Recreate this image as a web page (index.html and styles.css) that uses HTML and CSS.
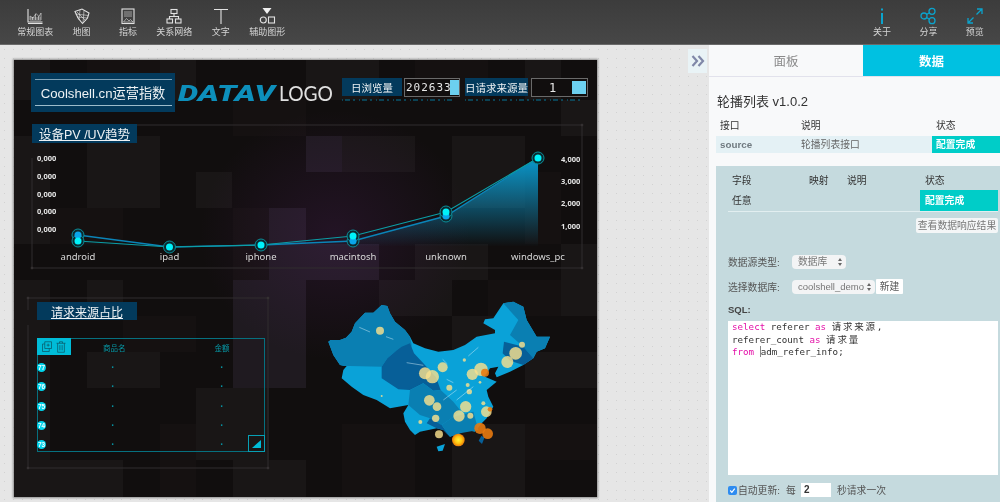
FILE: index.html
```
<!DOCTYPE html>
<html lang="zh">
<head>
<meta charset="utf-8">
<title>DataV</title>
<link rel="stylesheet" href="styles.css">
</head>
<body>
<header class="topbar">
  <nav class="tools">
    <div class="tool"><svg class="ico" viewBox="0 0 16 16"><path d="M1 1V14H15.500M1 15.500H15.500"/><path class="thin" d="M3 12V8L6 10 9 5.500 12 8.500 14 5V12ZM3 10H14M5.500 9V12M8.500 6V12M11.500 8V12"/></svg><span>常规图表</span></div>
    <div class="tool"><svg class="ico" viewBox="0 0 16 16"><path d="M1 3.500 8 1 15 5 13.500 10 8.500 15.500 4 10Z"/><path class="thin" d="M1.500 6 14.500 7.500M3 9 13.500 10M6 1.800 5 12M10 2.500 9 15M3 4 12 13"/></svg><span>地图</span></div>
    <div class="tool"><svg class="ico" viewBox="0 0 16 16"><rect x="2" y="1" width="12" height="14.500"/><path class="thin" d="M4 4H12M4 6H12M4 8H12"/><path class="thin" d="M3.500 14 6.500 10.500 9 13 10.500 11.500 13 14Z"/></svg><span>指标</span></div>
    <div class="tool"><svg class="ico" viewBox="0 0 16 16"><rect x="5" y="1.500" width="6" height="4"/><rect x="1" y="11" width="5.500" height="4"/><rect x="9.500" y="11" width="5.500" height="4"/><path d="M8 5.500V8.500M3.500 11V8.500H12.500V11"/></svg><span>关系网络</span></div>
    <div class="tool"><svg class="ico" viewBox="0 0 16 16"><path d="M1 1.500H15M8 1.500V16"/></svg><span>文字</span></div>
    <div class="tool"><svg class="ico" viewBox="0 0 16 16"><path class="solid" d="M3.500 0H12.500L8 6Z"/><circle cx="4.300" cy="12" r="3"/><rect x="9.500" y="9" width="6" height="6"/></svg><span>辅助图形</span></div>
  </nav>
  <nav class="tools">
    <div class="tool"><svg class="ico cy" viewBox="0 0 16 16"><path class="solidc" d="M7 0.500H9V2.500H7ZM7 5H9V16H7Z"/></svg><span>关于</span></div>
    <div class="tool"><svg class="ico cy" viewBox="0 0 16 16"><circle cx="4" cy="8" r="3"/><circle cx="12" cy="3.300" r="3"/><circle cx="12" cy="12.700" r="3"/><path d="M6.600 6.500 9.400 4.800M6.600 9.500 9.400 11.200"/></svg><span>分享</span></div>
    <div class="tool"><svg class="ico cy" viewBox="0 0 16 16"><path d="M9.500 6.500 15 1M10 1H15V6M6.500 9.500 1 15M1 10V15H6"/></svg><span>预览</span></div>
  </nav>
</header>
<div class="work">
  <main class="canvas">
    <section class="screen">
      <svg class="layer" viewBox="14 60 583 437">
        <defs>
          <radialGradient id="glow"><stop offset="0" stop-color="#6b2a80" stop-opacity=".2"/><stop offset="1" stop-color="#6b2a80" stop-opacity="0"/></radialGradient>
          <radialGradient id="hot"><stop offset="0" stop-color="#fff23a"/><stop offset=".55" stop-color="#ffc410"/><stop offset="1" stop-color="#e87808"/></radialGradient>
          <linearGradient id="area" x1="0" y1="0" x2="0" y2="1"><stop offset="0" stop-color="#0a98cc"/><stop offset="1" stop-color="#0a98cc" stop-opacity="0"/></linearGradient>
        </defs>
        <rect class="t0" x="14" y="60" width="583" height="437"/>
        <g class="t1">
          <rect x="14" y="60" width="36" height="40"/><rect x="160" y="60" width="36" height="40"/><rect x="306" y="60" width="73" height="40"/><rect x="525" y="60" width="36" height="40"/>
          <rect x="14" y="136" width="36" height="108"/><rect x="87" y="136" width="73" height="72"/><rect x="196" y="172" width="36" height="36"/><rect x="342" y="136" width="73" height="36"/>
          <rect x="452" y="136" width="73" height="72"/><rect x="14" y="280" width="36" height="217"/><rect x="87" y="352" width="73" height="36"/><rect x="196" y="388" width="73" height="72"/>
          <rect x="50" y="460" width="73" height="37"/><rect x="233" y="460" width="73" height="37"/><rect x="452" y="316" width="73" height="36"/><rect x="561" y="244" width="36" height="72"/>
          <rect x="452" y="424" width="73" height="73"/><rect x="379" y="280" width="73" height="36"/><rect x="525" y="352" width="72" height="36"/><rect x="87" y="280" width="36" height="36"/>
          <rect x="415" y="244" width="73" height="36"/><rect x="561" y="100" width="36" height="36"/>
        </g>
        <g class="t2">
          <rect x="87" y="60" width="73" height="40"/><rect x="233" y="100" width="73" height="36"/><rect x="415" y="60" width="73" height="40"/><rect x="50" y="208" width="73" height="36"/>
          <rect x="233" y="208" width="36" height="72"/><rect x="123" y="316" width="73" height="36"/><rect x="342" y="424" width="73" height="73"/><rect x="525" y="172" width="36" height="72"/>
          <rect x="160" y="424" width="36" height="73"/><rect x="525" y="424" width="72" height="36"/><rect x="488" y="280" width="73" height="36"/>
        </g>
        <g class="t3">
          <rect x="233" y="280" width="73" height="108"/><rect x="269" y="208" width="37" height="72"/><rect x="306" y="136" width="36" height="36"/><rect x="306" y="244" width="73" height="36"/>
        </g>
        <ellipse fill="url(#glow)" cx="335" cy="235" rx="135" ry="125"/>

        <g class="frame">
          <path d="M32 125H582V268H32V158"/>
          <path d="M28 310V298H268V468H28V325"/>
          <circle cx="582" cy="125" r="1"/><circle cx="582" cy="268" r="1"/><circle cx="32" cy="268" r="1"/><circle cx="28" cy="298" r="1"/><circle cx="268" cy="298" r="1"/><circle cx="28" cy="468" r="1"/><circle cx="268" cy="468" r="1"/>
        </g>

        <path fill="url(#area)" d="M78 241 169.500 247 261 245 353 241 446 216 538 158V246H78Z"/>
        <path class="lineb" d="M78 235 169.500 247 261 245 353 241 446 216 538 158"/>
        <path class="linec" d="M78 241 169.500 247 261 245 353 236 446 212 538 158"/>
        <g class="halo">
          <circle cx="78" cy="235" r="6"/><circle cx="78" cy="241" r="6"/><circle cx="169.500" cy="247" r="6"/><circle cx="261" cy="245" r="6"/><circle cx="353" cy="241" r="6"/><circle cx="353" cy="236" r="6"/><circle cx="446" cy="216" r="6"/><circle cx="446" cy="212" r="6"/><circle cx="538" cy="158" r="6"/>
        </g>
        <g class="dotb"><circle cx="78" cy="235" r="3.500"/><circle cx="353" cy="241" r="3.500"/><circle cx="446" cy="216" r="3.500"/></g>
        <g class="dotc"><circle cx="78" cy="241" r="3.500"/><circle cx="169.500" cy="247" r="3.500"/><circle cx="261" cy="245" r="3.500"/><circle cx="353" cy="236" r="3.500"/><circle cx="446" cy="212" r="3.500"/><circle cx="538" cy="158" r="3.500"/></g>

        <g class="ylab">
          <text x="37" y="161">0,000</text><text x="37" y="179">0,000</text><text x="37" y="197">0,000</text><text x="37" y="214">0,000</text><text x="37" y="232">0,000</text>
          <text x="561" y="162">4,000</text><text x="561" y="184">3,000</text><text x="561" y="206">2,000</text><text x="561" y="229">1,000</text>
        </g>
        <g class="xlab">
          <text x="78" y="260">android</text><text x="169.500" y="260">ipad</text><text x="261" y="260">iphone</text><text x="353" y="260">macintosh</text><text x="446" y="260">unknown</text><text x="538" y="260">windows_pc</text>
        </g>

        <text class="brand" x="178" y="101" textLength="97" lengthAdjust="spacingAndGlyphs">DATAV</text>
        <text class="brand2" x="279" y="101" textLength="54" lengthAdjust="spacingAndGlyphs">LOGO</text>
        <path class="dash" d="M342 100H455M465 100H580"/>

        <g transform="translate(310 290) scale(.33333)">
          <path class="m1" d="M55 155 62 150 90 150 108 143 125 125 135 100 165 68 190 68 215 45 232 48 240 70 255 95 285 120 300 140 310 160 345 175 385 185 430 180 465 165 500 140 555 130 555 120 520 100 525 88 550 85 580 40 610 35 640 50 650 90 680 140 720 140 705 175 680 185 670 205 640 225 600 245 560 262 555 250 565 230 540 235 525 260 560 275 530 300 535 320 550 350 530 385 515 400 495 425 470 420 450 430 420 440 400 420 380 415 355 420 330 425 315 435 300 420 285 395 280 370 295 345 240 355 200 330 160 315 125 290 95 265 100 240 110 228 90 225 70 195Z"/>
          <path class="m2" d="M55 155 62 150 90 150 108 143 125 125 135 100 165 68 190 68 215 45 232 48 240 70 255 95 285 120 300 140 305 165 300 190 275 180 255 185 232 205 215 230 120 228 100 228 90 225 70 195Z"/>
          <path class="m3" d="M215 230 232 205 255 185 275 170 300 160 312 190 340 220 378 262 392 300 370 302 340 280 300 300 265 298 215 265Z"/>
          <path class="m2" d="M300 300 340 280 370 302 392 300 430 335 450 360 430 380 395 405 360 385 330 375 295 345Z"/>
          <path class="m3" d="M360 385 395 405 420 440 400 420 380 415 350 400Z"/>
          <path class="m2" d="M430 380 490 365 505 420 450 430 420 440 395 405Z"/>
          <path class="m2" d="M580 40 610 35 640 50 650 90 680 140 720 140 705 175 680 185 670 205 640 170 600 135 625 90Z"/>
          <path class="m3" d="M582 155 640 170 670 205 640 225 600 212 578 190Z"/>
          <path class="m1" d="M380 470 405 462 398 482 385 484Z"/>
          <path class="m3" d="M514 438 524 442 516 462 506 452Z"/>
          <g class="bub">
            <circle cx="210" cy="122" r="12"/><circle cx="345" cy="250" r="18"/><circle cx="367" cy="260" r="20"/><circle cx="398" cy="232" r="15"/><circle cx="463" cy="210" r="5"/><circle cx="513" cy="238" r="20"/><circle cx="487" cy="253" r="17"/><circle cx="592" cy="216" r="18"/><circle cx="617" cy="190" r="19"/><circle cx="636" cy="164" r="9"/><circle cx="418" cy="293" r="9"/><circle cx="358" cy="331" r="16"/><circle cx="381" cy="350" r="13"/><circle cx="467" cy="350" r="17"/><circle cx="447" cy="378" r="17"/><circle cx="481" cy="377" r="9"/><circle cx="529" cy="365" r="16"/><circle cx="377" cy="385" r="11"/><circle cx="331" cy="396" r="6"/><circle cx="387" cy="433" r="12"/><circle cx="473" cy="285" r="6"/><circle cx="478" cy="305" r="8"/><circle cx="510" cy="277" r="4"/><circle cx="520" cy="340" r="6"/><circle cx="215" cy="318" r="3"/>
          </g>
          <g class="ora"><circle cx="510" cy="415" r="17"/><circle cx="533" cy="431" r="16"/><circle cx="525" cy="248" r="12"/><circle cx="540" cy="358" r="7"/></g>
          <circle fill="url(#hot)" cx="445" cy="450" r="19"/>
          <path class="trail" d="M148 112 180 126M228 140 250 148M290 218 340 226M505 172 475 198M398 208 412 222M400 330 440 300M440 330 490 290M410 268 430 278"/>
        </g>
      </svg>

      <div class="mainttl"><span>Coolshell.cn运营指数</span></div>
      <div class="lab lab-a"><span>日浏览量</span></div>
      <div class="val val-a"><span>202633</span><i></i></div>
      <div class="lab lab-b"><span>日请求来源量</span></div>
      <div class="val val-b"><span>1</span><i></i></div>

      <h2 class="sec sec-a">设备PV /UV趋势</h2>
      <h2 class="sec sec-b">请求来源占比</h2>

      <div class="tbl">
        <div class="tbl-tools">
          <svg viewBox="0 0 16 16"><path d="M5 1H14V10H5ZM5 4H2V14H11V10M9.500 3.500V7.500M7.500 5.500H11.500"/></svg>
          <svg viewBox="0 0 16 16"><path d="M2 3H14M6 3V1H10V3M3.500 3V15H12.500V3M6.500 5.500V12.500M9.500 5.500V12.500"/></svg>
        </div>
        <div class="tbl-head"><span></span><span>商品名</span><span>金额</span></div>
        <div class="tbl-row"><b>77</b><span>·</span><span>·</span></div>
        <div class="tbl-row"><b>76</b><span>·</span><span>·</span></div>
        <div class="tbl-row"><b>75</b><span>·</span><span>·</span></div>
        <div class="tbl-row"><b>74</b><span>·</span><span>·</span></div>
        <div class="tbl-row"><b>73</b><span>·</span><span>·</span></div>
        <div class="tbl-corner"></div>
      </div>
    </section>
    <button class="fold"><svg viewBox="0 0 14 12"><path d="M1.500 1 6 6 1.500 11M7.500 1 12 6 7.500 11"/></svg></button>
  </main>

  <aside class="panel">
    <div class="tabs"><div class="tab">面板</div><div class="tab on">数据</div></div>
    <div class="pbody">
      <h1 class="ptitle">轮播列表 v1.0.2</h1>
      <div class="grid-a ghead"><span>接口</span><span>说明</span><span>状态</span></div>
      <div class="grid-a grow"><span class="src">source</span><span>轮播列表接口</span><span class="ok">配置完成</span></div>
      <div class="cfg">
        <div class="grid-b ghead2"><span>字段</span><span>映射</span><span>说明</span><span>状态</span></div>
        <div class="grid-b grow2"><span>任意</span><span></span><span></span><span class="ok">配置完成</span></div>
        <div class="btnrow"><span class="btn">查看数据响应结果</span></div>
        <div class="frow first"><label>数据源类型:</label><span class="sel sel-s">数据库<em></em></span></div>
        <div class="frow second"><label>选择数据库:</label><span class="sel sel-l">coolshell_demo<em></em></span><span class="newb">新建</span></div>
        <div class="sqll">SQL:</div>
        <div class="sql"><div><u>select</u> referer <u>as</u> <span class="cj">请求来源,</span></div><div>referer_count <u>as</u> <span class="cj">请求量</span></div><div><u>from</u> <i class="caret"></i>adm_refer_info;</div></div>
        <div class="auto"><span class="chk"><svg viewBox="0 0 10 10"><path d="M2.500 5 4.300 7 7.500 3"/></svg></span><span class="al">自动更新:</span><span class="ae">每</span><span class="num">2</span><span class="as">秒请求一次</span></div>
      </div>
    </div>
  </aside>
</div>
</body>
</html>
```
FILE: styles.css
```
* { box-sizing: border-box; }
html, body { margin: 0; height: 502px; overflow: hidden; }
body { font-family: "Liberation Sans", "Noto Sans CJK SC", sans-serif; background: #e6e6e6; color: #444; }

.topbar { height: 45px; background: linear-gradient(#3c3c3c, #474747); display: flex; justify-content: space-between; padding: 0 2px 0 12px; border-bottom: 1px solid #6a6a6a; filter: blur(.3px); }
.tools { display: flex; }
.tool { width: 46.4px; display: flex; flex-direction: column; align-items: center; padding-top: 8px; color: #d4d4d4; font-size: 9px; line-height: 12px; white-space: nowrap; }
.ico { width: 16px; height: 16px; margin-bottom: 2px; fill: none; stroke: #e2e2e2; stroke-width: 1.100; overflow: visible; }
.ico .thin { stroke-width: .6; }
.ico .solid { fill: #f0f0f0; stroke: none; }
.ico.cy { stroke: #0ba3cc; stroke-width: 1.300; }
.ico .solidc { fill: #0ba3cc; stroke: none; }

.work { display: flex; height: 457px; filter: blur(.3px); }
.canvas { position: relative; width: 709px; padding: 15px 0 0 14px; background-color: #e6e6e6; background-image: radial-gradient(#d2d2d2 .8px, transparent 1px); background-size: 9px 9px; }
.screen { position: relative; width: 583px; height: 437px; box-shadow: 0 0 2px 1px #8d8d8d; overflow: hidden; }
.layer { position: absolute; left: 0; top: 0; width: 583px; height: 437px; }
.fold { position: absolute; left: 688px; top: 4px; width: 19px; height: 24px; padding: 0; border: 0; background: #e9f3f6; display: flex; align-items: center; justify-content: center; }
.fold svg { width: 14px; height: 12px; fill: none; stroke: #8088a8; stroke-width: 2.200; }

.t0 { fill: #110e0e; }
.t1 { fill: #191616; }
.t2 { fill: #151111; }
.t3 { fill: #1f1a20; }
.frame { fill: #4a4648; stroke: #312d2e; stroke-width: 1; }
.frame path { fill: none; }
.lineb { fill: none; stroke: #0b84b8; stroke-width: 1.400; }
.linec { fill: none; stroke: #0b9ea6; stroke-width: 1.200; }
.halo { fill: #0b2a30; stroke: #0b8d98; stroke-width: 1; }
.dotb { fill: #0aa5ea; }
.dotc { fill: #00f2fa; }
.ylab { fill: #e4e4e4; font-size: 7.500px; font-family: "Noto Sans", sans-serif; font-weight: 700; }
.xlab { fill: #d8d8d8; font-size: 9.500px; font-family: "Noto Sans", sans-serif; text-anchor: middle; }
.brand { fill: #0d8fbb; font-family: Roboto, sans-serif; font-weight: 900; font-style: italic; font-size: 22px; }
.brand2 { fill: #e0e0e0; font-family: Lato, sans-serif; font-weight: 400; font-size: 22px; }
.dash { fill: none; stroke: #06789c; stroke-width: 1; stroke-dasharray: 1 2 5 3 2 4; }
.m1 { fill: #0aa2d8; }
.m2 { fill: #0a7fb2; }
.m3 { fill: #075f98; }
.bub { fill: #f9e08e; fill-opacity: .82; }
.ora { fill: #e87a10; fill-opacity: .9; }
.trail { fill: none; stroke: #d8f2fa; stroke-width: 2; stroke-opacity: .7; }

.mainttl { position: absolute; left: 17px; top: 13px; width: 144px; height: 39px; background: #033a5c; color: #eef2f4; font-size: 13.200px; display: flex; align-items: center; justify-content: center; white-space: nowrap; }
.mainttl::before { content: ""; position: absolute; left: 4px; right: 3px; top: 6px; height: 1px; background: #7fa3b8; }
.mainttl::after { content: ""; position: absolute; left: 4px; right: 3px; bottom: 6px; height: 1px; background: #9dbccb; }
.lab { position: absolute; top: 18px; height: 18px; background: #033a5c; color: #eef2f4; font-size: 10.500px; display: flex; align-items: center; justify-content: center; white-space: nowrap; }
.lab-a { left: 328px; width: 60px; }
.lab-b { left: 451px; width: 63px; }
.val { position: absolute; top: 18px; height: 19px; border: 1px solid #6a6a6a; color: #e8e8e8; font-size: 12px; letter-spacing: 1px; display: flex; align-items: center; font-family: "DejaVu Sans Mono", monospace; background: #110e0e; }
.val i { position: absolute; background: #6cd0f0; }
.val-a { left: 390px; width: 56px; padding-left: 1px; font-size: 11px; }
.val-a i { right: 0; top: 1px; width: 9px; height: 15px; }
.val-b { left: 517px; width: 57px; padding-left: 17px; }
.val-b i { right: 1px; top: 2px; width: 14px; height: 13px; }

.sec { position: absolute; margin: 0; background: #033a5c; color: #eef2f4; font-weight: 400; text-decoration: underline; white-space: nowrap; display: flex; align-items: center; justify-content: center; }
.sec-a { left: 18px; top: 64px; width: 105px; height: 19px; font-size: 12.500px; }
.sec-b { left: 23px; top: 242px; width: 100px; height: 18px; font-size: 12px; }

.tbl { position: absolute; left: 23px; top: 278px; width: 228px; height: 114px; border: 1px solid #06707f; color: #079aa8; font-size: 7.500px; }
.tbl-tools { position: absolute; left: -1px; top: -1px; width: 34px; height: 17px; background: #00bcd8; display: flex; align-items: center; justify-content: space-around; padding: 0 3px; }
.tbl-tools svg { width: 12px; height: 12px; fill: none; stroke: #0a5a68; stroke-width: 1; }
.tbl-head, .tbl-row { display: grid; grid-template-columns: 65px 20px 89px 20px; }
.tbl-head { height: 19px; padding-top: 4px; line-height: 12px; white-space: nowrap; }
.tbl-head span, .tbl-row span { text-align: center; }
.tbl-head span:last-child, .tbl-row span:last-child { grid-column: 4; }
.tbl-row { height: 19.300px; align-items: center; font-size: 10px; font-weight: 700; color: #07909f; }
.tbl-row b { width: 9px; height: 9px; border-radius: 50%; background: #00d4ec; color: #f2ffff; font-size: 6.500px; line-height: 9px; text-align: center; margin-left: -1px; }
.tbl-corner { position: absolute; right: -1px; bottom: -1px; width: 17px; height: 17px; border: 1px solid #07a0b5; }
.tbl-corner::after { content: ""; position: absolute; right: 3px; bottom: 3px; border-style: solid; border-width: 0 0 8px 9px; border-color: transparent transparent #00bcd8 transparent; }

.panel { width: 291px; background: #f8f9fa; font-size: 9.800px; }
.tabs { display: flex; height: 32px; border-bottom: 1px solid #e2e2ec; }
.tab { display: flex; align-items: center; justify-content: center; color: #8a8a8a; font-size: 12.500px; height: 31px; }
.tab:first-child { width: 154px; }
.tab.on { width: 137px; background: #00c1e1; color: #fff; font-weight: 700; }
.pbody { padding: 17px 0 0 7px; }
.ptitle { margin: 0 0 0 1px; font-weight: 400; font-size: 13px; line-height: 16px; color: #333; }
.grid-a { display: grid; grid-template-columns: 81px 135px 68px; }
.ghead { margin-top: 9px; line-height: 14px; color: #333; }
.ghead span { padding-left: 4px; }
.grow { margin-top: 3px; height: 17px; line-height: 17px; background: #e4f1f5; color: #666; }
.grow span { padding-left: 4px; }
.src { font-weight: 700; color: #707a80; }
.ok { background: #00cdc8; color: #fff; font-weight: 700; }
.cfg { margin-top: 13px; height: 336px; background: #c5dade; padding: 8px 2px 0 12px; }
.grid-b { display: grid; grid-template-columns: 81px 38px 73px 78px; }
.ghead2 { line-height: 14px; color: #333; }
.ghead2 span:first-child { padding-left: 4px; }
.ghead2 span:last-child { padding-left: 5px; }
.grow2 { margin-top: 2px; height: 22px; border-bottom: 1px solid #e2eef0; line-height: 21px; color: #333; }
.grow2 span:first-child { padding-left: 4px; }
.grow2 .ok { padding-left: 5px; }
.btnrow { display: flex; justify-content: flex-end; margin-top: 6px; }
.btn { width: 82px; height: 15px; border-radius: 2px; background: #f4f6f7; color: #777; line-height: 15px; text-align: center; white-space: nowrap; }
.frow { display: flex; align-items: center; height: 15px; }
.frow.first { margin-top: 21px; }
.frow.second { margin-top: 10px; }
.frow label { width: 64px; color: #555; white-space: nowrap; }
.sel { position: relative; height: 14px; line-height: 14px; border-radius: 4px; background: #f3f4f5; color: #777; padding-left: 6px; white-space: nowrap; }
.sel-s { width: 54px; }
.sel-l { width: 83px; font-size: 9.500px; }
.sel em::before, .sel em::after { content: ""; position: absolute; right: 4px; border-left: 2.500px solid transparent; border-right: 2.500px solid transparent; }
.sel em::before { top: 3px; border-bottom: 3px solid #666; }
.sel em::after { bottom: 3px; border-top: 3px solid #666; }
.newb { width: 27px; height: 15px; line-height: 15px; background: #fff; text-align: center; margin-left: 1px; color: #555; border-radius: 1px; }
.sqll { margin-top: 9px; line-height: 14px; color: #444; font-weight: 700; font-size: 9.500px; }
.sql { margin-top: 4px; height: 154px; background: #fff; padding: 0 4px; font-family: "DejaVu Sans Mono", "Noto Sans CJK SC", monospace; font-size: 9.200px; line-height: 12.500px; color: #333; }
.sql u { text-decoration: none; color: #e410a8; }
.cj { letter-spacing: 1.800px; font-size: 9.500px; }
.caret { display: inline-block; width: 0; height: 11px; border-left: 1px solid #888; vertical-align: -2px; }
.auto { margin-top: 8px; display: flex; align-items: center; height: 14px; color: #555; white-space: nowrap; }
.chk { width: 9px; height: 9px; border-radius: 2px; background: #2e8cf0; display: flex; }
.chk svg { width: 9px; height: 9px; fill: none; stroke: #fff; stroke-width: 1.300; }
.al { margin-left: 1px; width: 48px; }
.ae { width: 15px; }
.num { width: 30px; height: 14px; background: #fff; font-weight: 700; color: #333; font-size: 10px; line-height: 14px; padding-left: 3px; }
.as { margin-left: 6px; }
```
